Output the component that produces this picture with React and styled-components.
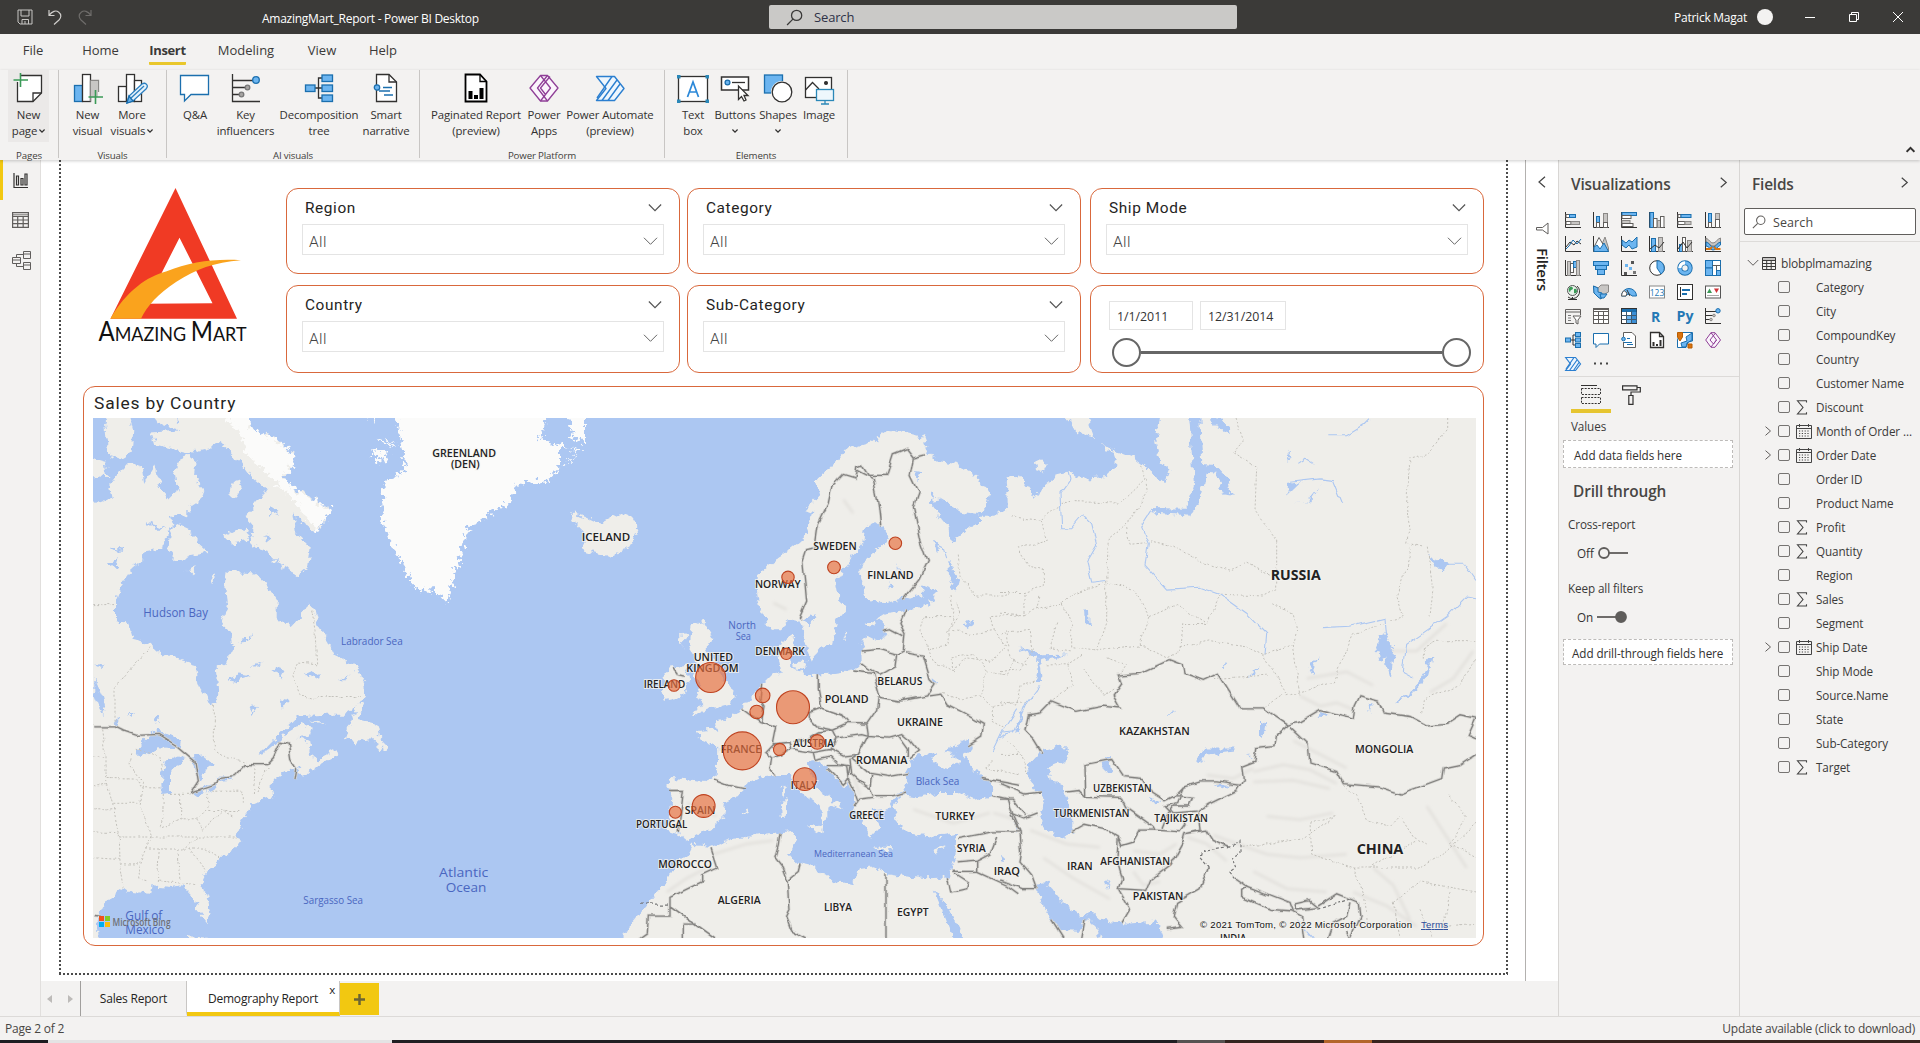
import React from "react";
import styled, { createGlobalStyle } from "styled-components";

const Global = createGlobalStyle`
  * { box-sizing: border-box; }
  html, body { margin: 0; padding: 0; }
  body {
    width: 1920px; height: 1043px; overflow: hidden; background: #f3f2f1;
    font-family: "Open Sans", "Noto Sans", sans-serif; font-size: 11.5px; color: #323130;
  }
  svg { display: block; flex: none; }
`;

const INK = "#323130";
const BLUE = "#1b6fae";
const SKY = "#6cb5f0";
const GREY = "#a6a4a2";
const YELLOW = "#f2c811";

/* ---------- shell ---------- */
const Shell = styled.div`
  width: 1920px; height: 1043px; display: flex; flex-direction: column; overflow: hidden;
`;
const TitleBar = styled.header`
  height: 34px; flex: none; background: #3b3a38; color: #fff; display: flex; align-items: center;
`;
const QuickAccess = styled.div`
  width: 262px; padding-left: 17px; display: flex; align-items: center; gap: 14px;
`;
const DocTitle = styled.div`
  width: 507px; padding-top: 3px; font-size: 12px; letter-spacing: -0.27px; white-space: nowrap;
`;
const TitleSearch = styled.div`
  width: 468px; height: 24px; border-radius: 2px; background: #cac9c7; color: #2f3247;
  display: flex; align-items: center; gap: 11px; padding-left: 17px; font-size: 13px; letter-spacing: -0.15px;
`;
const UserArea = styled.div`
  flex: 1; display: flex; align-items: center; justify-content: flex-end; padding-right: 16px;
`;
const UserName = styled.span`font-size: 12px; letter-spacing: -0.25px; padding-top: 1px;`;
const Avatar = styled.span`
  width: 16px; height: 16px; border-radius: 50%; background: #f3f2f1; margin: 0 31px 0 10px;
`;
const WindowButtons = styled.div`display: flex; align-items: center; gap: 32px;`;

const RibbonTabs = styled.nav`
  height: 36px; flex: none; display: flex; background: #f3f2f1; padding-left: 13px;
`;
const RibbonTab = styled.div`
  width: ${(p) => p.$w}px; display: flex; justify-content: center; align-items: flex-start; padding-top: 7px;
  font-size: 13px; letter-spacing: ${(p) => (p.$active ? "-0.35px" : "0")}; line-height: 18px; color: #3b3a39;
  font-weight: ${(p) => (p.$active ? 700 : 400)};
  & > span { display: block; padding-bottom: 3px; border-bottom: 3px solid ${(p) => (p.$active ? "#e9c72b" : "transparent")}; border-radius: 1px; }
`;
const Ribbon = styled.div`
  height: 90px; flex: none; display: flex; background: #f3f2f1; padding-bottom: 2px;
  box-shadow: 0 1px 3px rgba(0, 0, 0, 0.2); z-index: 2;
`;
const Group = styled.section`
  width: ${(p) => p.$w}px; border-right: 1px solid #c8c6c4; display: flex; flex-direction: column;
`;
const GroupItems = styled.div`
  display: flex; height: 72px; padding-left: ${(p) => p.$pad}px;
`;
const GroupLabel = styled.div`
  text-align: center; font-size: 9.7px; line-height: 14px; margin-top: 4px; padding-top: 3px; height: 17px; flex: none;
  letter-spacing: -0.15px; color: #3f3e3c; margin-bottom: -5px;
`;
const Command = styled.div`
  width: ${(p) => p.$w}px; display: flex; flex-direction: column; align-items: center; padding-top: 3px;
  background: ${(p) => (p.$hot ? "#ebe9e8" : "transparent")};
  font-size: 11.4px; line-height: 16px; letter-spacing: -0.12px; white-space: nowrap;
`;
const CommandIcon = styled.div`height: 34px;`;
const CommandLine = styled.div`display: flex; align-items: center; gap: 2px; height: 16px; justify-content: center;`;
const RibbonEnd = styled.div`
  flex: 1; display: flex; justify-content: flex-end; align-items: flex-end; padding: 0 5px 4px 0;
`;

const Workspace = styled.div`height: 856px; flex: none; display: flex;`;
const Rail = styled.aside`
  width: 41px; border-right: 1px solid #e1dfdd; display: flex; flex-direction: column;
`;
const RailItem = styled.div`
  height: 40px; display: flex; align-items: center; padding-left: 9px;
  border-left: 3px solid ${(p) => (p.$active ? YELLOW : "transparent")};
`;
const Center = styled.div`width: 1518px; display: flex; flex-direction: column; border-right: 1px solid #d8d6d4;`;
const CanvasRow = styled.div`height: 821px; display: flex; background: #fff;`;
const Canvas = styled.main`width: 1485px; border-right: 1px solid #b3b1af; padding-left: 18px;`;
const Page = styled.div`
  width: 1449px; height: 815px; padding: 28px 0 0 24px;
  background:
    repeating-linear-gradient(to bottom, #4b4b4b 0 2px, transparent 2px 4px) left top / 2px 100% no-repeat,
    repeating-linear-gradient(to bottom, #4b4b4b 0 2px, transparent 2px 4px) right top / 2px 100% no-repeat,
    repeating-linear-gradient(to right, #4b4b4b 0 2px, transparent 2px 4px) left bottom / 100% 2px no-repeat;
`;
const Top = styled.div`display: flex; height: 185px;`;
const LogoBox = styled.div`width: 203px; padding-left: 12px;`;
const Slicers = styled.div`
  display: grid; grid-template-columns: 401px 403px 394px; grid-template-rows: 97px 88px;
`;
const Card = styled.div`
  width: 394px; height: ${(p) => p.$h}px; border: 1px solid #d9683c; border-radius: 12px;
  padding: ${(p) => p.$pad || "7px 15px 0"}; font-family: Roboto, sans-serif;
`;
const SlicerHead = styled.div`
  display: flex; justify-content: space-between; align-items: center; height: 23px; padding: 0 2px 0 3px;
  font-size: 15.4px; letter-spacing: 0.6px; color: #252423;
`;
const SlicerBox = styled.div`
  margin-top: 5px; height: 31px; border: 1px solid #e4e4e4; display: flex; justify-content: space-between;
  align-items: center; padding: 3px 5px 0 6px; font-size: 15.5px; font-weight: 300; letter-spacing: 0.4px; color: #444;
`;
const SlicerValue = styled.span`padding-top: 1px;`;
const DateRow = styled.div`display: flex; gap: 7px;`;
const DateInput = styled.div`
  width: ${(p) => p.$w}px; height: 29px; border: 1px solid #e4e4e4; padding: 2px 0 0 7px; line-height: 26px;
  font-family: "Open Sans", sans-serif; font-size: 12.4px; color: #333; letter-spacing: -0.05px;
`;
const Slider = styled.div`display: flex; align-items: center; margin: 8px 0 0 3px;`;
const Thumb = styled.span`width: 29px; height: 29px; flex: none; border: 2.5px solid #666; border-radius: 50%;`;
const Track = styled.span`width: 301px; height: 3px; flex: none; background: #666;`;
const MapCard = styled.div`
  margin-top: 13px; width: 1401px; height: 560px; border: 1px solid #d9683c; border-radius: 12px; padding: 5px 0 0 9px;
`;
const MapTitle = styled.div`
  height: 26px; line-height: 22px; padding-left: 1px; font-family: Roboto, sans-serif; font-size: 17.4px; letter-spacing: 0.82px; color: #252423;
`;

const FiltersPane = styled.div`
  width: 32px; display: flex; flex-direction: column; align-items: center; padding-top: 16px; background: #fff;
`;
const FiltersLabel = styled.div`
  writing-mode: vertical-rl; font-size: 15px; font-weight: 600; letter-spacing: -0.25px; line-height: 20px; margin: 13px 0 0 2px; color: #252423;
`;
const FunnelSlot = styled.div`margin-top: 34px;`;

const SheetBar = styled.div`height: 35px; display: flex; background: #f3f2f1;`;
const SheetNav = styled.div`
  width: 40px; border-right: 1px solid #a19f9d; display: flex; align-items: center; justify-content: space-between; padding: 0 7px 0 6px;
`;
const SheetTab = styled.div`
  width: ${(p) => p.$w}px; display: flex; align-items: center; justify-content: center; position: relative;
  font-size: 12px; letter-spacing: -0.2px; color: #252423;
  background: ${(p) => (p.$active ? "#fff" : "transparent")};
  border-bottom: 4px solid ${(p) => (p.$active ? YELLOW : "transparent")};
  border-right: 1px solid #c8c6c4; padding-top: 3px; white-space: nowrap;
`;
const CloseTab = styled.span`position: absolute; right: 4px; top: 0; font-size: 11.5px; line-height: 18px;`;
const AddSheet = styled.div`
  width: 39px; height: 32px; margin-top: 2px; background: ${YELLOW}; display: grid; place-items: center;
`;

/* ---------- panes ---------- */
const VizPane = styled.aside`width: 181px; border-right: 1px solid #d8d6d4;`;
const PaneHead = styled.div`
  height: 48px; display: flex; align-items: center; justify-content: space-between; padding: 0 10px 0 12px;
  font-size: 15.4px; font-weight: 600; letter-spacing: -0.18px; color: #484644;
  & > svg { margin-bottom: 3px; }
`;
const VizGrid = styled.div`
  display: grid; grid-template-columns: repeat(6, 28px); grid-auto-rows: 24px; padding: 4px 0 0 6px; height: 169px;
  border-bottom: 1px solid #dcdad8;
`;
const VizTabs = styled.div`display: flex; padding: 8px 0 0 12px;`;
const VizTab = styled.div`
  width: 40px; height: 28px; display: flex; justify-content: center;
  border-bottom: 4px solid ${(p) => (p.$active ? "#e6c530" : "transparent")};
`;
const FieldLabel = styled.div`margin: ${(p) => p.$m}; line-height: 16px; font-size: 11.7px; letter-spacing: -0.1px; color: #3b3a39;`;
const DropBox = styled.div`
  width: 170px; height: ${(p) => p.$h}px; margin-left: 4px; padding: ${(p) => p.$pad}; background: #fff; border: 1px dashed #bdbbb9;
  display: flex; align-items: center; font-size: 11.7px; letter-spacing: -0.07px; white-space: nowrap;
`;
const DrillTitle = styled.div`
  margin: 13px 0 0 14px; font-size: 15.4px; line-height: 22px; font-weight: 600; letter-spacing: -0.12px; color: #484644;
`;
const ToggleRow = styled.div`display: flex; align-items: center; margin: ${(p) => p.$m}; height: 16px; font-size: 11.7px; gap: ${(p) => p.$gap || 4}px;`;

const FieldsPane = styled.aside`width: 180px;`;
const SearchBox = styled.div`
  width: 172px; height: 27px; margin-left: 4px; border: 1px solid #605e5c; border-radius: 2px; background: #fff;
  display: flex; align-items: center; gap: 7px; padding: 1px 0 0 7px; font-size: 12.5px; letter-spacing: 0.1px; color: #484644;
`;
const FieldsList = styled.div`margin-top: 6px; border-top: 1px solid #dddbd9; padding-top: 9px; color: #3b3a39;`;
const TableRow = styled.div`display: flex; align-items: center; height: 24px; padding-left: 7px; gap: 3px; font-size: 12px; letter-spacing: -0.2px;`;
const TableName = styled.span`padding-left: 2px;`;
const FieldRow = styled.div`
  display: grid; grid-template-columns: 15px 18px 20px 1fr; align-items: center; height: 24px; padding-left: 23px;
  font-size: 11.7px; letter-spacing: -0.1px; white-space: nowrap;
`;
const Check = styled.span`width: 12px; height: 12px; border: 1px solid #767472; border-radius: 2px;`;

const StatusBar = styled.footer`
  height: 24px; flex: none; border-top: 1px solid #dcdad8; display: flex; justify-content: space-between; align-items: center;
  padding: 0 5px 0 5px; font-size: 12px; letter-spacing: -0.22px; color: #484644;
`;
const Strip = styled.div`height: 3px; flex: none; display: flex;`;
const StripPart = styled.span`width: ${(p) => p.$w}px; background: ${(p) => p.$c};`;

/* ---------- small icons ---------- */
const Chevron = ({ dir = "down", w = 14, c = "#444", s = 1.2 }) => {
  const d = { down: "M1 4 L8 11 L15 4", up: "M1 12 L8 5 L15 12", left: "M12 1 L4 8 L12 15", right: "M4 1 L12 8 L4 15" }[dir];
  return (
    <svg width={w} height={w} viewBox="0 0 16 16" fill="none" stroke={c} strokeWidth={(s * 16) / w}>
      <path d={d} />
    </svg>
  );
};
const Magnifier = ({ w = 16, c = INK }) => (
  <svg width={w} height={w} viewBox="0 0 16 16" fill="none" stroke={c} strokeWidth="1.2">
    <circle cx="10" cy="6" r="4.8" />
    <path d="M6.5 9.5 L1 15" />
  </svg>
);

const Svg32 = ({ children }) => (
  <svg width="32" height="32" viewBox="0 0 32 32" fill="none" strokeWidth="1.3" stroke={INK}>
    {children}
  </svg>
);
const RibbonIcons = {
  page: (
    <Svg32>
      <path d="M8 2.5 H28.5 V20 L20 28.5 H4.5 V9" fill="#fff" />
      <path d="M28.5 20 H20 V28.5" />
      <path d="M7.5 0 V14 M0.5 7 H15" stroke="#3b9a57" strokeWidth="1.6" />
    </Svg32>
  ),
  visual: (
    <Svg32>
      <rect x="2.5" y="12.5" width="8" height="16" fill={SKY} stroke={BLUE} />
      <rect x="10.5" y="1.5" width="8" height="27" fill="#fff" />
      <path d="M18.5 7.5 H26.5 V19 M18.5 28.5 V7.5" fill="#c8c6c4" stroke="#8a8886" />
      <rect x="19" y="8" width="7" height="16" fill="#c8c6c4" stroke="none" />
      <path d="M23.5 17 V31 M16.5 24 H31" stroke="#3b9a57" strokeWidth="1.6" />
    </Svg32>
  ),
  more: (
    <Svg32>
      <rect x="2.5" y="13.5" width="8" height="15" fill="#fff" />
      <rect x="10.5" y="1.5" width="8" height="27" fill="#fff" />
      <rect x="18.5" y="7.5" width="7" height="21" fill="#fff" />
      <path d="M11 30 L13 23 L26 11 Q29 9 31 12 Q32 14 30 16 L17 28 Z" fill="#e5f2fb" stroke="#2b7fc0" />
      <path d="M11 30 L13 23 L17 28 Z" fill={SKY} stroke={BLUE} />
      <path d="M15 25 L28 13" stroke="#2b7fc0" />
    </Svg32>
  ),
  qa: (
    <Svg32>
      <path d="M1.5 2.5 H29.5 V21.5 H12 L5.5 28 V21.5 H1.5 Z" fill="#fff" stroke={BLUE} />
    </Svg32>
  ),
  key: (
    <Svg32>
      <path d="M2.5 1 V28.5 H30 M2.5 7.5 H23 M2.5 14.5 H15 M2.5 21.5 H9" />
      <circle cx="26" cy="7" r="3.3" fill={SKY} stroke={BLUE} />
      <circle cx="17.5" cy="14.5" r="2.3" fill={GREY} stroke="#777" />
      <circle cx="11.5" cy="21.5" r="2.3" fill={GREY} stroke="#777" />
    </Svg32>
  ),
  tree: (
    <Svg32>
      <path d="M12 15 H20 M15.5 15 V5 H20 M15.5 15 V25 H20" />
      <g fill={SKY} stroke={BLUE}>
        <rect x="2.5" y="12" width="9.5" height="6.5" />
        <rect x="19" y="2" width="10.5" height="6.5" />
        <rect x="19" y="12" width="10.5" height="6.5" />
        <rect x="19" y="22" width="10.5" height="6.5" />
      </g>
    </Svg32>
  ),
  smart: (
    <Svg32>
      <path d="M6.5 12 V1.5 H19 L26.5 9 V28.5 H6.5 V17" fill="#fff" />
      <path d="M19 1.5 V9 H26.5" />
      <path d="M13 14.5 H22 M9 18 H20 M14 22 H23" stroke={BLUE} />
      <circle cx="7" cy="14.5" r="2.7" fill={SKY} stroke={BLUE} />
    </Svg32>
  ),
  paginated: (
    <Svg32>
      <path d="M5.5 1.5 H20 L26.5 8.5 V28.5 H5.5 Z" fill="#fff" stroke="#000" strokeWidth="1.8" />
      <path d="M20 1.5 V8.5 H26.5" stroke="#000" />
      <path d="M10.5 18 V26 M16 22 V26 M21.5 15 V26" stroke="#000" strokeWidth="4" />
    </Svg32>
  ),
  apps: (
    <Svg32>
      <g stroke="#8f3f97" strokeWidth="1.3" strokeLinejoin="round" fill="#fbf5fc">
        <path d="M12.5 2.5 H19.5 L30 15 L19.500 28 H12.500 L2 15 Z" />
        <path d="M12.500 2.500 L22.500 15 L17.500 21.500 L12.500 15 L22 3.500 M12.500 28 L22.500 15 M19.500 28 L9.500 15 L19.500 2.500" fill="none" />
      </g>
    </Svg32>
  ),
  automate: (
    <Svg32>
      <g stroke="#2b7fd0" strokeWidth="1.4" strokeLinejoin="round" fill="#eef6fd">
        <path d="M2.5 3.5 H20.5 L30 15.5 L20.5 27.5 H2.5 L12 15.5 Z" />
        <path d="M18 3.5 L3 25 M23 7 L8 27.5 M26 11 L14 27.5" fill="none" />
      </g>
    </Svg32>
  ),
  text: (
    <Svg32>
      <rect x="1.5" y="3.5" width="29" height="25" fill="#fff" />
      <path d="M10.5 24 L16 9 L21.5 24 M12.5 19 H19.5" stroke="#2b88d8" strokeWidth="1.7" />
      <g fill="#2b88b8" stroke="none">
        <rect x="0" y="2" width="3.5" height="3.5" /><rect x="28.5" y="2" width="3.5" height="3.5" />
        <rect x="0" y="26.5" width="3.5" height="3.5" /><rect x="28.5" y="26.5" width="3.5" height="3.5" />
      </g>
    </Svg32>
  ),
  button: (
    <Svg32>
      <rect x="2.5" y="4" width="27" height="13" fill="#fff" strokeWidth="1.5" />
      <circle cx="8.5" cy="9.5" r="2.4" fill={SKY} stroke={BLUE} />
      <path d="M13 9.5 H26" />
      <path d="M19.5 13 V26.5 L22.5 23.5 L25 28 L27 27 L25 22.5 H29 Z" fill="#fff" />
    </Svg32>
  ),
  shapes: (
    <Svg32>
      <rect x="2.5" y="2" width="18" height="18" fill={SKY} stroke={BLUE} />
      <circle cx="20" cy="19" r="11" fill="#f3f2f1" stroke="none" />
      <circle cx="20" cy="19" r="9.8" fill="#fff" />
    </Svg32>
  ),
  image: (
    <Svg32>
      <rect x="2.5" y="4.5" width="26" height="20" fill="#fff" />
      <path d="M2.5 17 L9.5 9.5 L16 16" />
      <circle cx="23" cy="10" r="1.4" fill={INK} />
      <rect x="13.5" y="16.5" width="17" height="11" fill="#eef7fc" stroke="#2b88b8" />
      <path d="M22 27.5 V31 M18 31 H26" stroke="#2b88b8" />
    </Svg32>
  ),
};

const groups = [
  { label: "Pages", w: 59, pad: 8, items: [["page", 41, "New", "page", 1]] },
  { label: "Visuals", w: 108, pad: 5, items: [["visual", 47, "New", "visual"], ["more", 42, "More", "visuals", 1]] },
  { label: "AI visuals", w: 253, pad: 4, items: [["qa", 48, "Q&A"], ["key", 53, "Key", "influencers"], ["tree", 94, "Decomposition", "tree"], ["smart", 40, "Smart", "narrative"]] },
  { label: "Power Platform", w: 245, pad: 7, items: [["paginated", 98, "Paginated Report", "(preview)"], ["apps", 38, "Power", "Apps"], ["automate", 94, "Power Automate", "(preview)"]] },
  { label: "Elements", w: 183, pad: 9, items: [["text", 38, "Text", "box"], ["button", 46, "Buttons", "", 1], ["shapes", 40, "Shapes", "", 1], ["image", 42, "Image"]] },
];

/* ---------- visualization gallery ---------- */
const axes = <path d="M.5 0 V15.5 H16" stroke={INK} fill="none" />;
const bl = { fill: SKY, stroke: BLUE };
const gr = { fill: "#c8c6c4", stroke: "#8a8886" };
const wh = { fill: "#fff", stroke: "#605e5c" };
const R = ({ b, k }) => <rect x={b[0]} y={b[1]} width={b[2]} height={b[3]} {...k} />;
const letters = { fontFamily: "Open Sans, sans-serif", fontWeight: 700, fill: "#2478b5" };
const gallery = [
  <>{axes}<R b={[1, 2.5, 4, 3]} k={wh} /><R b={[4.5, 2.5, 6, 3]} k={bl} /><R b={[1, 9.5, 5, 3]} k={wh} /><R b={[6, 9.5, 8.5, 3]} k={gr} /></>,
  <>{axes}<R b={[3.5, 4.5, 3, 6]} k={bl} /><R b={[3.5, 10.5, 3, 5]} k={wh} /><R b={[10.5, 1.5, 4, 9]} k={gr} /><R b={[10.5, 10.5, 4, 5]} k={wh} /></>,
  <>{axes}<R b={[1, .5, 14.5, 3]} k={bl} /><R b={[1, 3.5, 9, 3]} k={wh} /><R b={[1, 8.5, 8, 3]} k={gr} /><R b={[1, 11.5, 11, 3]} k={wh} /></>,
  <>{axes}<R b={[1, .5, 3.5, 15]} k={bl} /><R b={[4.5, 6.5, 3.5, 9]} k={wh} /><R b={[8.5, 8.5, 3, 7]} k={gr} /><R b={[11.5, 4.5, 3.5, 11]} k={wh} /></>,
  <>{axes}<R b={[1, 2.5, 3, 3]} k={wh} /><R b={[4, 2.5, 10, 3]} k={bl} /><R b={[1, 9.5, 7, 3]} k={wh} /><R b={[8, 9.5, 6, 3]} k={gr} /></>,
  <>{axes}<R b={[3.5, 1.5, 3, 9]} k={bl} /><R b={[3.5, 10.5, 3, 5]} k={wh} /><R b={[10.5, 1.5, 4, 6]} k={gr} /><R b={[10.5, 7.5, 4, 8]} k={wh} /></>,
  <>{axes}<path d="M1 11 L5 6 L9 9 L12 5 L16 8" stroke={INK} fill="none" /><path d="M1 13 L4 10 L8 4 L12 8 L16 3" stroke={BLUE} fill="none" /></>,
  <>{axes}<path d="M9 8 L12 1 L15.5 12 V15.5 H9Z" {...gr} /><path d="M1 11 L6 1.5 L11 10 L8 15 H1Z" {...wh} /><path d="M1 11 L4 9 L7 13 L11 7 L15.5 15.5 H1Z" {...bl} /></>,
  <>{axes}<path d="M1 4 L5 7 L8 4 L11 6 L16 1 V11 L11 13 L8 9 L5 12 L1 9Z" {...bl} /></>,
  <>{axes}<R b={[2.5, 2.5, 4, 13]} k={bl} /><R b={[9.5, 1.5, 4, 14]} k={gr} /><path d="M1 13 L6 9 L10 12 L15 6" stroke={INK} fill="none" /></>,
  <>{axes}<R b={[2.5, 8.5, 3, 7]} k={bl} /><R b={[5.5, 1.5, 3, 14]} k={wh} /><R b={[10.5, 4.5, 4, 11]} k={gr} /><path d="M1 13 L6 6 L10 12 L15 6" stroke={INK} fill="none" /></>,
  <>{axes}<path d="M1 2 C5 4 5 7 8 7 C11 7 12 3 15.5 2 V6 C12 7 11 10 8 10 C5 10 4 6 1 6Z" {...gr} /><path d="M1 6 C5 7 5 11 8 11 C11 11 12 7 15.5 6 V9 C12 11 11 14 8 14 C5 14 4 10 1 10Z" {...bl} /><path d="M1 13 H5 L7 11 M15.5 13 H11 L9 11" stroke="#d9730f" fill="none" strokeWidth="2" /></>,
  <>{axes}<R b={[2.5, 1.5, 3, 14]} k={gr} /><R b={[5.5, 3.5, 3, 9]} k={wh} /><R b={[8.5, 1.5, 3, 6]} k={bl} /><R b={[11.5, .5, 3, 15]} k={gr} /></>,
  <><R b={[.5, 1.5, 15, 4]} k={bl} /><R b={[2.5, 5.5, 11, 4]} k={bl} /><R b={[4.5, 9.5, 7, 5]} k={bl} /></>,
  <>{axes}<g fill="#555"><rect x="10" y="1" width="3" height="3" /><rect x="3" y="12" width="3" height="3" /><rect x="12" y="11" width="3" height="3" fill="#777" /></g><g fill={SKY}><rect x="4" y="4" width="3" height="3" /><rect x="8" y="7" width="3" height="3" /></g></>,
  <><circle cx="8" cy="8" r="7.3" fill="#fff" stroke={INK} /><path d="M8 .7 A7.3 7.3 0 0 1 12 14 L8 8Z" {...bl} /></>,
  <><circle cx="8" cy="8" r="5.2" fill="none" stroke={BLUE} strokeWidth="5" /><circle cx="8" cy="8" r="5.2" fill="none" stroke={SKY} strokeWidth="3.2" /><path d="M8 2.8 A5.2 5.2 0 0 0 2.8 8" fill="none" stroke="#fff" strokeWidth="3.2" /></>,
  <><R b={[.5, .5, 15, 15]} k={{ ...wh, stroke: BLUE }} /><R b={[.5, .5, 7, 7.5]} k={bl} /><R b={[.5, 8, 7, 7.5]} k={bl} /><path d="M7.5 5.5 H15.5 M11.5 5.5 V15.5" stroke="#605e5c" /><R b={[11.5, 10.5, 4, 5]} k={bl} /></>,
  <><circle cx="7.5" cy="6.5" r="5" fill="#e8f3ea" stroke="#555" /><path d="M5 3 Q8 2 8 5 Q5 6 5 8 Q3 7 4 4Z M9 5 Q12 4 12 8 Q10 10 9 9Z" fill="#3b9a57" /><path d="M12 2 A7 7 0 0 1 3 13 M7.5 13 V15.5 M3 15.5 H12" stroke={INK} fill="none" /></>,
  <><path d="M.5 2 L5 4 L8 1 L15.5 1 V8 L12 10 L8 15 L5 13 L1 9Z" {...gr} /><path d="M.5 2 L5 4 L5 8 L9 9 L8 15 L5 13 L1 9Z" {...bl} /><path d="M7 10 H14 L11 14 H8Z" {...bl} /></>,
  <><path d="M.5 12 A7.5 7.5 0 0 1 15.5 12 H11 A3.4 3.4 0 0 0 5 12Z" {...bl} /><path d="M.5 12 A7.5 7.5 0 0 1 3 6.5 L6 9 L5 12Z" {...wh} /><path d="M6 6 L9 12" stroke={INK} /></>,
  <><R b={[.5, 2, 15, 12]} k={{ fill: "#fff", stroke: "#888" }} /><text x="8" y="11.5" fontSize="8.5" textAnchor="middle" fontFamily="Open Sans, sans-serif" fill="#2478b5">123</text></>,
  <><R b={[.5, .5, 15, 15]} k={{ fill: "#fff", stroke: INK }} /><path d="M3.5 3 V13" stroke={INK} /><path d="M5 6 H13 M5 10 H10" stroke={BLUE} strokeWidth="2" /></>,
  <><R b={[.5, 2, 15, 12]} k={{ fill: "#fff", stroke: "#555" }} /><path d="M2 9 L4.5 4.5 L7 9Z" fill="#3b9a57" /><path d="M9 4.5 H14 L11.5 9Z" fill="#d13438" /><path d="M2 11.5 H14" stroke="#aaa" /></>,
  <><path d="M.5 15.5 V1.5 H15.5 V7 M.5 4 H15.5 M.5 15.5 H9" stroke="#605e5c" fill="none" /><path d="M3 7.5 H6 M3 10 H6 M3 12.5 H6" stroke="#777" /><path d="M8 8 H16 L13 12 V16 L11 15 V12Z" {...wh} /></>,
  <><R b={[.5, .5, 15, 15]} k={{ fill: "#fff", stroke: "#605e5c" }} /><path d="M.5 3.5 H15.5 M.5 7.5 H15.5 M.5 11.5 H15.5 M5.5 3 V15.5 M10.5 3 V15.5 M.5 1.5 H15.5" stroke="#605e5c" /></>,
  <><R b={[.5, .5, 15, 15]} k={{ fill: "#fff", stroke: INK }} /><rect x="1" y="1" width="14.5" height="3" fill={BLUE} /><rect x="6" y="8" width="5" height="7" fill={SKY} /><rect x="11" y="4" width="4.5" height="11" fill="#3b8fd6" /><path d="M.5 7.5 H15.5 M.5 11.5 H15.5 M5.5 3 V15.5 M10.5 3 V15.5" stroke="#405a70" /></>,
  <text x="2" y="13.5" fontSize="14" {...letters}>R</text>,
  <text x="-.5" y="13" fontSize="13.5" textLength="17" lengthAdjust="spacingAndGlyphs" {...letters}>Py</text>,
  <>{axes}<path d="M1 3.5 H11 M1 7.5 H8 M1 11.5 H5" stroke={INK} /><circle cx="13" cy="2.8" r="2.2" {...bl} /><circle cx="9" cy="7.5" r="1.3" {...gr} /><circle cx="6" cy="11.5" r="1.3" {...gr} /></>,
  <><path d="M5 8 H10 M8 8 V3 H10 M8 8 V13 H10" stroke={INK} fill="none" /><R b={[.5, 6, 5, 4]} k={bl} /><R b={[10.5, .5, 5, 4]} k={bl} /><R b={[10.5, 6, 5, 4]} k={bl} /><R b={[10.5, 11.5, 5, 4]} k={bl} /></>,
  <path d="M.5 1.5 H15.5 V12 H6.5 L3 15.5 V12 H.5Z" fill="#fff" stroke={BLUE} />,
  <><path d="M2.5 5 V.5 H11 L14.5 4 V15.5 H2.5 V10" {...wh} /><path d="M6 6.5 H9 M3 10.5 H11 M6 12.5 H12" stroke={BLUE} /><circle cx="2.5" cy="7" r="1.8" {...bl} /></>,
  <><path d="M1.5 .5 H10.5 L14.5 4.5 V15.5 H1.5Z M10.5 .5 V4.5 H14.5" fill="#fff" stroke={INK} strokeWidth="1.3" /><path d="M4.5 10 V14 M8 12 V14 M11.5 8 V14" stroke={INK} strokeWidth="2" /></>,
  <><path d="M3 .5 H15.5 V9 L11 10 L9 15.5 H.5 V8Z" fill="#fff" stroke={BLUE} /><path d="M15 1 L9 5 L10 9 L4 11 L5 15 L9 15 L10 11 L15 8Z" fill={SKY} stroke={BLUE} /><path d="M.5 .5 H5.5 V5 L3 9 L.5 5Z M11 12 H15 V16 H11Z" fill="#d9730f" stroke="#b85c00" /></>,
  <g fill="#fbf5fc" stroke="#8f3f97"><path d="M6 .7 H10 L15.5 8 L10 15.3 H6 L.7 8Z" /><path d="M6 .7 L11.500 8 L8.500 12 L5 8 L10.500 1 M6 15 L11.500 8" fill="none" /></g>,
  <g fill="#eef6fd" stroke="#2b7fd0" strokeWidth="1.2"><path d="M.7 1.5 H10.5 L15.5 8 L10.5 14.5 H.7 L5.5 8Z" /><path d="M9 1.5 L1 13 M12 4 L4.5 14.5 M14 6.5 L8.5 14.5" fill="none" /></g>,
  <g fill="#444"><rect x="1" y="6.5" width="2" height="2" /><rect x="7" y="6.5" width="2" height="2" /><rect x="13" y="6.5" width="2" height="2" /></g>,
];

const Sigma = () => (
  <svg width="12" height="15" viewBox="0 0 12 15" fill="none" stroke="#444" strokeWidth="1.1">
    <path d="M10.5 2.5 V.8 H1.5 L7 7.5 L1.5 14 H10.5 V12.3" />
  </svg>
);
const Calendar = () => (
  <svg width="16" height="15" viewBox="0 0 16 15" fill="none" stroke="#444">
    <path d="M.5 1.5 H15.5 V14.5 H.5Z M.5 4.5 H15.5 M3.5 0 V3 M12.5 0 V3" />
    <path d="M3 7 H13.5 M3 9.5 H13.5 M3 12 H13.5" strokeDasharray="1.2 1.6" />
  </svg>
);
const TableIcon = ({ w = 14, c = "#3b3a39" }) => (
  <svg width={w} height={w - 1} viewBox="0 0 14 13" fill="none" stroke={c}>
    <path d="M.5 .5 H13.5 V12.5 H.5Z M.5 3.5 H13.5 M.5 6.5 H13.5 M.5 9.5 H13.5 M4.7 3 V12.5 M9.2 3 V12.5" />
    <path d="M.5 2 H13.5" strokeWidth=".5" />
  </svg>
);

const fields = [
  ["Category"], ["City"], ["CompoundKey"], ["Country"], ["Customer Name"], ["Discount", "sum"],
  ["Month of Order ...", "date"], ["Order Date", "date"], ["Order ID"], ["Product Name"], ["Profit", "sum"],
  ["Quantity", "sum"], ["Region"], ["Sales", "sum"], ["Segment"], ["Ship Date", "date"], ["Ship Mode"],
  ["Source.Name"], ["State"], ["Sub-Category"], ["Target", "sum"],
];

/* ---------- map ---------- */
/* Three sheets of the map share one vertical scale; each sheet has its own horizontal origin. */
const SHEET = { A: 80, B: 560, C: 1000 };
const KX = 1 / 3;
const KY = 1 / 2.904;
const toX = (s, x) => SHEET[s] + x * KX;
const toY = (y) => 410 + y * KY;
const path = (s, str, close) => {
  const n = str.trim().split(/[\s,]+/).map(Number);
  let d = "";
  for (let i = 0; i < n.length; i += 2) d += (i ? "L" : "M") + toX(s, n[i]).toFixed(1) + " " + toY(n[i + 1]).toFixed(1);
  return d + (close ? "Z" : "");
};
const Shapes = ({ data, close = true }) =>
  Object.keys(data).map((s) => <path key={s} d={data[s].map((p) => path(s, p, close)).join("")} />);

const land = {
  A: [
    "0,275 60,270 95,255 88,220 110,190 145,155 185,165 192,212 225,160 240,215 262,262 290,235 285,180 300,140 325,130 350,150 345,190 368,230 360,262 325,285 325,315 270,300 280,330 255,365 250,400 190,410 185,440 150,470 125,505 108,550 108,610 145,620 160,668 210,680 250,712 345,738 352,790 380,830 392,855 405,855 415,830 412,770 410,745 440,730 462,690 455,655 425,615 440,560 435,500 440,470 525,475 560,510 590,550 590,605 635,630 665,600 685,560 705,585 715,625 745,670 765,710 830,750 855,790 858,830 840,855 790,885 740,885 650,890 600,940 560,980 530,1000 550,1000 590,968 625,935 660,915 695,922 690,945 655,950 685,965 690,1000 710,1015 770,985 775,1000 740,1020 690,1050 670,1068 660,1045 648,1030 640,1040 600,1065 575,1080 575,1105 580,1122 535,1135 510,1145 505,1165 480,1195 485,1215 468,1225 478,1262 430,1295 380,1345 365,1375 385,1430 392,1470 380,1490 355,1455 340,1410 310,1380 270,1385 215,1380 210,1405 160,1400 130,1390 80,1425 50,1480 55,1570 0,1570",
    "280,-20 490,-20 520,60 580,80 640,130 640,160 610,190 640,230 700,260 752,290 710,352 670,335 640,300 650,360 692,400 685,455 650,485 600,450 560,410 510,395 520,350 500,305 540,260 560,230 510,190 480,150 440,110 410,90 390,110 330,125 225,100 215,65 290,60 300,40",
    "0,130 75,150 85,195 0,190", "75,40 95,-10 140,-10 160,60 155,120 120,140 85,130", "200,-10 290,-10 295,55 240,40",
    "480,205 490,225 470,255 448,245 455,210", "285,330 330,350 350,385 385,415 330,425 290,440 265,410 270,360",
    "430,365 470,345 510,350 500,380 450,388", "320,465 350,450 335,480", "390,480 405,475 400,505",
    "855,850 835,900 870,905 895,920 900,950 918,975 905,985 870,955 830,965 795,955 800,935 815,900 830,860", "685,895 742,917 715,912",
    "330,1528 390,1533 330,1545",
  ],
  B: [
    "600,575 590,520 590,480 640,440 700,395 740,360 760,300 735,290 785,240 765,205 810,170 860,115 930,95 985,60 1030,65 1090,80 1105,120 1130,150 1190,160 1250,190 1287,250 1270,305 1200,295 1140,260 1105,265 1130,300 1165,340 1170,385 1195,370 1230,340 1280,330 1320,300 1350,290 1345,250 1350,200 1380,190 1460,300 1460,1570 185,1570 190,1533 215,1490 260,1440 310,1380 340,1330 380,1290 395,1262 450,1270 520,1245 600,1235 700,1225 710,1250 690,1290 720,1320 770,1330 820,1365 880,1380 900,1330 935,1325 980,1345 1040,1355 1100,1360 1165,1358 1185,1300 1195,1230 1130,1240 1080,1235 1040,1225 1015,1200 1000,1150 1020,1115 1000,1130 985,1160 935,1165 960,1210 930,1242 905,1195 880,1150 885,1110 850,1085 800,1040 775,1015 745,1020 755,1060 775,1105 820,1130 850,1160 805,1148 805,1180 785,1205 785,1165 760,1135 725,1112 690,1060 640,1060 600,1065 560,1085 550,1105 495,1140 490,1180 450,1215 400,1240 380,1248 355,1230 320,1218 330,1175 335,1110 322,1090 330,1068 440,1078 470,1060 472,975 415,950 408,932 475,928 468,905 510,895 545,870 570,840 605,800 635,770 665,765 655,710 665,675 702,652 705,690 690,720 695,748 740,770 775,768 820,765 885,755 905,735 903,690 920,655 950,670 985,655 975,630 952,605 975,590 1040,580 1110,565 1080,530 1035,545 960,562 920,550 903,490 905,450 940,420 965,395 985,370 972,345 945,325 915,340 910,385 880,420 845,470 825,500 835,545 862,570 830,610 812,680 790,690 755,730 735,670 718,610 700,605 655,640 620,625",
    "55,340 35,300 75,310 120,330 180,300 215,315 235,350 215,390 150,428 95,415 60,405 85,370",
    "395,625 430,615 457,660 435,700 460,720 495,790 527,815 515,850 440,870 395,887 430,845 405,830 425,800 400,770 420,740 385,690",
    "340,745 375,740 387,780 370,830 315,842 305,820 320,790 310,765",
    "740,1210 790,1203 787,1232", "660,1140 682,1130 680,1182 662,1182", "665,1095 677,1088 675,1125 667,1120", "948,1268 1002,1270 1002,1276 950,1274",
    "1120,1277 1157,1263 1132,1285", "700,732 742,730 735,755 705,750", "850,665 858,642 862,645 854,668", "918,622 942,612 945,625 925,632", "545,1165 562,1160 558,1172",
    "380,660 365,690 360,650",
  ],
  C: [
    "20,195 70,200 50,240 60,280 105,265 120,230 170,190 210,180 235,200 320,195 350,160 335,115 400,140 440,170 495,212 510,175 480,150 465,90 485,-20 1480,-20 1480,1570 -60,1570 -60,310 25,310",
    "105,150 120,143 138,160 130,178 108,172", "185,-10 250,-10 282,78 230,70", "305,95 340,125 318,120",
  ],
};
const snow = {
  A: [
    "410,-10 490,-10 520,60 580,80 640,130 640,160 610,190 640,230 700,260 752,290 710,352 640,262 560,180 500,130 490,80",
    "945,-10 960,80 975,130 970,180 925,200 905,240 910,330 940,400 980,470 1010,525 1060,520 1100,562 1115,510 1140,430 1160,350 1230,300 1290,270 1310,215 1400,205 1495,120 1440,100 1380,90 1390,50 1420,-10",
    "880,110 925,130 912,155 882,140", "890,80 960,110 900,92", "1460,-10 1515,-10 1515,95 1480,80", "865,-10 900,-10 880,38", "1440,108 1507,110 1440,175",
  ],
};
const water = {
  A: [
    "165,1002 190,965 230,925 260,940 302,960 300,985 230,982 180,1008", "245,1115 243,1050 260,1015 300,1003 320,1010 290,1025 270,1060 270,1112",
    "325,1008 365,1003 398,1030 375,1045 362,1082 350,1060 340,1030", "333,1108 410,1083 412,1095 350,1120", "410,1065 460,1063 457,1077 415,1080",
    "40,775 65,830 78,882 62,875 40,820", "440,780 480,765 515,772 470,788", "675,765 700,755 720,768 690,780", "580,755 600,742 612,760 600,780", "775,785 820,765 795,785",
    "480,670 520,650 500,668", "515,745 550,730 530,745", "505,885 520,855 528,858 512,888", "600,850 620,835 625,850 608,862", "40,740 65,738 50,750", "140,880 172,880 160,888",
    "220,895 238,888 240,905 225,908", "100,905 118,900 118,925", "195,322 250,340 262,345 225,345", "85,400 135,402 130,410 100,405", "550,360 580,370 565,382", "570,280 600,300 570,310",
    "90,440 120,430 112,455 95,455", "45,228 62,225 58,240",
  ],
  B: [
    "1040,1085 1035,1055 1060,1010 1105,995 1135,1000 1118,1018 1145,1045 1205,1022 1175,1000 1212,1002 1235,1030 1270,1070 1302,1095 1295,1122 1240,1132 1190,1112 1130,1112 1070,1125 1040,1120 1015,1130 1020,1118",
    "1150,992 1232,953 1235,985 1200,1005 1175,998", "1120,1390 1165,1440 1225,1570 1195,1570 1150,1460", "1085,508 1130,525 1122,558 1092,548", "1165,440 1197,490 1187,528 1167,480",
    "735,610 765,590 770,597 745,625", "1065,180 1085,185 1075,210", "1015,450 1025,480 1018,485", "985,490 1000,520 990,525", "1120,380 1140,400 1128,412", "1210,620 1240,610 1230,630", "1118,785 1132,795 1120,800",
    "1110,240 1125,235 1118,262", "1320,1290 1332,1300 1325,1310",
  ],
  C: [
    "565,-10 600,-10 607,160 650,163 677,190 695,243 668,240 650,185 617,182 602,250 570,307 458,297 455,285 560,287 582,220 575,120", "630,-10 685,50 690,70 640,45",
    "125,990 190,973 207,990 195,1020 145,1040 152,1080 190,1090 200,1120 217,1190 217,1228 180,1242 135,1215 118,1170 130,1130 93,1080 78,1040",
    "103,1380 142,1373 190,1430 250,1470 270,1453 300,1480 380,1492 470,1485 505,1570 310,1570 290,1500 255,1480 240,1512 180,1510 130,1440",
    "590,1020 610,983 700,983 705,992 622,1000 605,1025", "1182,850 1240,812 1275,760 1285,715 1297,718 1282,775 1230,832", "300,1020 330,1008 337,1048 318,1048", "640,1095 690,1088 668,1104",
    "1128,690 1152,640 1182,700 1172,787 1155,720 1135,730", "500,885 520,873 510,885", "780,905 800,910 790,955 780,940", "955,872 980,880 960,895", "315,1370 332,1365 325,1390",
    "865,215 960,200 900,210 862,245", "880,272 935,262 965,215 925,265", "862,115 875,140 866,145", "1290,425 1345,445 1325,470 1300,440", "255,580 270,578 272,635 258,620", "55,690 130,712 205,710 120,730 130,790 108,790 115,725",
    "45,940 70,850 60,935", "925,745 960,712 940,745 942,775", "745,775 777,743 760,770", "1105,850 1118,852 1110,878", "740,990 760,1010 745,1002", "665,745 680,738 672,752", "35,1190 60,1220 50,1225", "450,1130 490,1140 465,1142",
  ],
};
const rivers = {
  C: [
    "455,295 425,340 445,385 435,450 500,520 600,515 660,535 740,590 800,650 795,710", "205,180 210,200 180,240 185,345 215,345 250,305 275,330 290,390 260,440 275,500 320,495", "1428,545 1400,540 1340,600 1220,680 1210,760 1240,775",
    "965,632 1050,628 1155,605 1160,660", "985,75 1040,75 1090,45 1110,25", "870,210 960,200 1000,205 1028,272", "892,155 915,140 940,155", "0,955 20,940 40,935 80,850 120,800", "1320,445 1390,445 1428,495", "890,1480 940,1533",
  ],
  B: ["1300,990 1330,930 1370,870", "1160,430 1150,400 1120,385", "1380,930 1330,935"],
};
const borders = {
  A: ["40,920 105,920 130,932 170,945 235,942 290,975 345,1020 355,1080 335,1110 410,1085 415,1070 460,1065 495,1030 560,1030 580,1010 600,965 625,970 632,1015 648,1040 642,1075", "40,1468 62,1470"],
  B: [
    "718,605 740,555 735,500 728,440 740,405 765,400 775,330 805,270 815,225 850,190 885,200 890,165 905,160 925,190 980,190 1000,130 1040,115 1060,140 1095,130", "890,175 940,200 955,270 962,335",
    "1060,140 1050,190 1075,240 1060,280 1080,370 1105,440 1080,490 1030,550", "1035,585 1020,620 1035,650 1030,700 1010,710 960,695 905,700", "965,640 990,635 1030,655",
    "1035,705 1090,715 1110,780 1125,795 1100,830 1020,845 960,835 950,800 940,765 880,758", "1010,710 1005,745 960,770 925,750 905,735", "775,770 775,810 785,865 845,885 865,910 920,912 950,870 955,835",
    "785,865 745,880 745,895 770,920 820,930 865,910", "820,930 830,950 905,940 925,945 920,912", "1110,830 1145,825 1165,855 1215,880 1270,910 1265,950 1225,975", "925,945 985,950 1025,940 1050,960 1075,990 1050,1010",
    "925,945 895,1000 875,1010 930,1055 990,1065 1045,1055", "1015,945 1045,985 1045,1005", "830,950 810,985 850,1005 895,1000", "700,965 740,955 775,935 820,930", "700,985 760,995 815,985 830,950",
    "760,995 765,1015 810,1005 830,1025 870,1030 865,1070 880,1100 895,1140", "800,1030 860,1030 865,1075 850,1090 800,1040", "870,1010 875,1060 905,1085 930,1100 935,1060", "930,1100 940,1120 1000,1120 1035,1110", "885,1150 900,1130 940,1125",
    "545,865 580,890 600,905 650,920 640,970 615,995 635,1010 630,1045 645,1060", "605,795 600,840 612,860 605,905", "640,970 690,965 695,985 665,1000 640,1010", "465,1075 505,1090 555,1100", "330,1108 370,1108 365,1150 355,1225", "340,745 355,765 375,770",
    "450,1270 470,1330 425,1350 425,1370 330,1415 330,1470 265,1470 262,1525 240,1540", "330,1440 465,1533", "370,1533 370,1490 410,1490", "660,1230 655,1265 645,1300 670,1330 685,1370 690,1450 680,1470 695,1510 740,1533", "720,1320 715,1340 685,1365", "978,1345 978,1540",
    "1195,1245 1300,1225 1380,1225", "1290,1290 1310,1240", "1190,1315 1250,1310 1290,1290", "1180,1340 1250,1340 1250,1312", "1250,1340 1340,1380 1375,1405", "1165,1360 1175,1400 1220,1390 1225,1370 1185,1345", "1265,1070 1380,1090", "1300,1120 1345,1130 1360,1180 1380,1225",
  ],
  C: [
    "125,995 100,955 75,930 85,885 120,880 155,845 230,875 310,860 360,865 340,830 365,795 355,770 420,765 510,725 550,740 555,765 610,785 655,765 720,865 790,865 865,915 830,945 825,975 770,980 765,1020 725,1035 730,1070 720,1090 650,1080 600,1080 550,1095 525,1120 495,1135 455,1110 430,1070 370,1065 335,1015 255,1030 257,1120",
    "865,915 900,905 960,870 1060,895 1065,860 1080,830 1135,845 1150,880 1230,890 1280,915 1340,910 1380,885 1428,895 1405,945 1428,955", "1428,1000 1380,1030 1330,1040 1325,1070 1200,1115 1140,1095 1030,1085 1010,1050 930,1025 925,970 870,920",
    "200,1110 240,1105 257,1122 365,1125 380,1155 460,1210 465,1220", "215,1225 255,1203 310,1215 355,1240 365,1265 400,1255 420,1220 465,1220 540,1225 555,1205 550,1185", "720,1090 710,1105 625,1145 595,1165 600,1220 555,1230",
    "525,1120 580,1125 570,1150 520,1150 500,1180 485,1215", "550,1095 530,1140 500,1150 520,1170 590,1165", "355,1240 350,1310 365,1360 355,1390 440,1395 455,1360 510,1320 550,1250 555,1230 620,1220 640,1250 685,1270", "355,1390 390,1450 365,1490",
    "625,1330 600,1390 530,1430 520,1470 545,1500 500,1505", "705,1360 735,1380 870,1430 880,1455 810,1450 725,1415 725,1395 745,1380", "885,1435 930,1425 955,1445 890,1452 885,1435", "955,1440 1010,1405 1050,1420 1075,1430 1080,1470 1050,1533 1040,1510", "875,1455 905,1470 915,1540", "985,1533 1000,1490 1040,1470 1050,1430",
    "30,1175 60,1225 65,1280 60,1310 95,1350 110,1390 70,1390 0,1365", "30,1170 70,1185 110,1170", "0,1130 40,1130 65,1160 80,1175", "0,1085 75,1115 120,1110", "155,1480 190,1533", "255,1480 245,1533",
  ],
};
const dashes = {
  A: [
    "40,565 105,565", "210,690 135,770 105,810 105,910", "403,855 403,985 440,1010 500,1020", "695,580 705,640 710,740 655,735 635,770 660,830 700,840 710,832 845,832", "65,925 75,1005 75,1060 100,1150 115,1230 117,1310 130,1390", "40,1007 72,1007",
    "80,1070 170,1072 190,1100 180,1150 205,1200 215,1240 190,1290 175,1330 180,1365 205,1370", "155,1000 150,1030 190,1080 190,1097 240,1097", "40,1088 80,1088", "100,1142 175,1142", "40,1158 105,1158", "40,1228 115,1230", "115,1240 210,1240", "40,1300 115,1305",
    "120,1318 180,1318", "215,1240 470,1240", "195,1275 370,1275 420,1300", "238,1275 232,1375", "290,1275 300,1365", "235,1368 350,1378", "250,1115 248,1190 240,1215", "302,1115 302,1190 240,1215", "270,1113 335,1113", "302,1190 350,1190 380,1160 385,1110",
    "400,1107 490,1107 490,1140", "385,1163 480,1163", "350,1190 370,1220 430,1165 460,1180", "330,1275 380,1345", "525,1040 520,1120", "565,1040 540,1080 530,1110", "170,985 240,1005 245,1050", "310,1275 360,1240",
  ],
  B: [
    "1195,420 1200,480 1250,540 1330,540 1380,525", "1170,540 1180,600 1090,600 1080,640 1105,690 1160,680 1180,600", "1180,640 1240,650 1300,640 1290,600 1380,595", "1105,690 1120,730 1180,760 1170,720 1240,710", "1180,760 1220,720 1290,730 1340,690 1300,640", "1150,820 1200,840 1260,830 1280,760 1240,710",
    "1280,760 1340,770 1360,720", "1260,830 1300,860 1290,900 1330,920", "1300,1020 1280,1040 1380,1060", "1340,640 1350,720 1400,740", "1190,560 1200,590 1160,650", "1300,860 1400,850",
  ],
  C: [
    "705,23 730,90 700,125 770,165 765,290 830,380 830,520 790,540 660,535", "1340,23 1340,55 1290,125 1230,140 1220,270 1230,330 1220,385 1275,400", "1235,400 1190,540 1210,600 1170,610", "1285,400 1300,510 1290,600", "450,380 520,395 600,440 690,465 740,445 810,480",
    "185,265 360,270 435,200 425,165", "440,200 445,235 380,330 325,375 320,500 320,610 290,695", "0,530 75,530 130,510 130,460 85,450 55,400 145,380 120,320 185,275", "30,310 120,320", "380,340 390,390 440,385", "320,500 400,520 450,600 420,680 500,720 540,700 545,620 620,620 660,540",
    "450,600 530,565 620,620", "540,690 630,670 740,685 790,710 880,685 890,640 880,590 820,560", "880,685 900,830", "790,710 860,820 800,860", "640,780 800,770", "860,830 1000,790 1060,650 1150,620", "725,1270 910,1245 1010,1180 930,1200 935,1290 1060,1330 1110,1330 1250,1250",
    "1030,1090 1070,1120 1100,1190 1170,1210 1200,1180 1240,1240 1280,1260", "1110,1330 1250,1330 1330,1290 1428,1200", "1060,1330 1090,1400 1100,1500", "1180,1430 1260,1370 1428,1400", "1350,1120 1400,1180 1350,1260 1428,1300", "1180,1430 1200,1533", "1260,1450 1300,1533", "1350,1400 1330,1500 1428,1490",
    "0,590 75,595 75,530", "75,595 110,580 120,540", "110,580 190,560 220,530 320,500", "190,560 215,630 215,690 290,700 420,685", "0,650 90,640 100,700", "170,620 150,690 215,700", "0,760 60,750 100,700", "0,850 50,860 60,800 110,790", "140,740 200,740 250,710", "200,740 220,800 160,840", "250,750 310,830 340,810", "320,720 380,740 360,770",
    "1270,690 1320,670 1428,670", "1270,690 1270,720", "1265,880 1270,840 1380,800 1428,720", "20,960 60,1000 80,1060", "0,1000 60,1000",
  ],
};
const disputed = {
  B: ["240,1435 330,1435"],
  C: ["625,1330 600,1300 605,1282 680,1272 720,1250 720,1285 695,1300 708,1330 690,1342 705,1360", "955,1450 1050,1420"],
};
const ridges = {
  C: [
    "760,1050 850,1030 930,1045 1010,1085", "760,1080 880,1075 990,1100", "880,960 960,1000 1040,1040", "640,1235 800,1290 900,1300 1040,1290", "560,1240 620,1260 680,1310", "760,1340 860,1390 980,1400", "90,1220 200,1260 300,1270", "130,1300 220,1360 330,1420",
    "400,1280 480,1290 530,1260", "400,1340 430,1380 480,1370", "900,830 960,860 1010,850 1060,870", "920,780 1040,760 1120,800", "1150,700 1250,700 1340,620", "1290,820 1360,780 1420,700", "1060,1400 1160,1440 1250,1500", "800,1180 900,1190 1000,1170",
    "1280,1150 1340,1240 1400,1330", "1120,1330 1180,1380 1230,1480", "620,1060 700,1070 760,1040",
  ],
  B: ["320,1400 380,1360 440,1330", "460,1290 560,1260 640,1250", "640,560 680,580", "850,260 880,300", "1060,1160 1180,1200 1290,1170", "380,1140 470,1180", "1300,1170 1370,1190", "880,1060 900,1120"],
};

const labels = [
  ["B", "ICELAND", 65, 211, 368], ["B", "SWEDEN", 760, 890, 395], ["B", "NORWAY", 585, 722, 507], ["B", "FINLAND", 922, 1061, 480], ["B", "UNITED", 401, 519, 718], ["B", "KINGDOM", 379, 536, 751],
  ["B", "IRELAND", 251, 376, 797], ["B", "DENMARK", 586, 734, 699], ["B", "POLAND", 794, 926, 840], ["B", "BELARUS", 952, 1087, 788], ["B", "UKRAINE", 1011, 1149, 906], ["B", "FRANCE", 482, 604, 984],
  ["B", "AUSTRIA", 700, 821, 969], ["B", "ROMANIA", 888, 1042, 1017], ["B", "ITALY", 692, 771, 1089], ["B", "SPAIN", 374, 466, 1162], ["B", "PORTUGAL", 228, 382, 1204], ["B", "GREECE", 868, 972, 1178],
  ["B", "TURKEY", 1126, 1244, 1181], ["B", "SYRIA", 1190, 1277, 1273], ["B", "IRAQ", 1301, 1380, 1339], ["B", "MOROCCO", 295, 456, 1319], ["B", "ALGERIA", 473, 602, 1423], ["B", "LIBYA", 792, 876, 1444], ["B", "EGYPT", 1011, 1106, 1457],
  ["A", "GREENLAND", 1057, 1248, 125], ["A", "(DEN)", 1113, 1199, 158],
  ["C", "RUSSIA", 812, 962, 480, 14], ["C", "KAZAKHSTAN", 357, 569, 932], ["C", "MONGOLIA", 1065, 1240, 985], ["C", "UZBEKISTAN", 279, 455, 1099], ["C", "TURKMENISTAN", 161, 388, 1171], ["C", "TAJIKISTAN", 463, 624, 1185],
  ["C", "CHINA", 1070, 1210, 1273, 14.5], ["C", "IRAN", 201, 278, 1325], ["C", "AFGHANISTAN", 301, 510, 1309], ["C", "PAKISTAN", 398, 550, 1411], ["C", "INDIA", 660, 739, 1534],
];
const seas = [
  ["A", "Hudson Bay", 190, 384, 590, 12], ["A", "Labrador Sea", 783, 968, 671, 10.3], ["A", "Atlantic", 1077, 1225, 1342, 13.3], ["A", "Ocean", 1097, 1219, 1387, 13.3], ["A", "Sargasso Sea", 670, 849, 1425, 10.3],
  ["A", "Gulf of", 136, 247, 1468, 12], ["A", "Mexico", 136, 253, 1508, 12], ["B", "North", 505, 588, 624, 10.3], ["B", "Sea", 527, 573, 658, 10.3], ["B", "Black Sea", 1067, 1198, 1077, 10.3], ["B", "Mediterranean Sea", 762, 999, 1288, 8.8],
];
const bubbles = [
  [1006, 387, 6.3], [822, 457, 6.4], [684, 486, 6.2], [679, 708, 5.7], [452, 777, 15], [342, 800, 5.8], [608, 829, 7.3], [590, 877, 6.8],
  [699, 863, 16.5], [547, 990, 19], [659, 986, 6.2], [772, 964, 7.3], [734, 1072, 11.4], [431, 1150, 11.4], [346, 1168, 6],
];

const WorldMap = () => (
  <svg width="1383" height="520" viewBox="93 418 1383 520" fontFamily="Open Sans, Noto Sans, sans-serif">
    <defs>
      <filter id="coast" filterUnits="userSpaceOnUse" x="60" y="390" width="1450" height="580">
        <feTurbulence type="fractalNoise" baseFrequency="0.13" numOctaves="3" seed="7" />
        <feDisplacementMap in="SourceGraphic" scale="10" xChannelSelector="R" yChannelSelector="G" />
      </filter>
      <filter id="jagged" filterUnits="userSpaceOnUse" x="60" y="390" width="1450" height="580">
        <feTurbulence type="fractalNoise" baseFrequency="0.2" numOctaves="3" seed="3" />
        <feDisplacementMap in="SourceGraphic" scale="16" xChannelSelector="R" yChannelSelector="G" />
      </filter>
      <filter id="wobble" filterUnits="userSpaceOnUse" x="60" y="390" width="1450" height="580">
        <feTurbulence type="fractalNoise" baseFrequency="0.07" numOctaves="2" seed="11" />
        <feDisplacementMap in="SourceGraphic" scale="6" xChannelSelector="R" yChannelSelector="G" />
      </filter>
      <filter id="soft" filterUnits="userSpaceOnUse" x="60" y="390" width="1450" height="580">
        <feGaussianBlur stdDeviation="1.8" />
      </filter>
    </defs>
    <rect x="93" y="418" width="1383" height="520" fill="#acc7f2" />
    <g fill="#efeeea" filter="url(#coast)"><Shapes data={land} /></g>
    <g fill="#fbfbfa" filter="url(#jagged)"><Shapes data={snow} /></g>
    <g fill="none" stroke="#e2e0dc" strokeWidth="2.5" filter="url(#soft)"><Shapes data={ridges} close={false} /></g>
    <g fill="#acc7f2" filter="url(#coast)"><Shapes data={water} /></g>
    <g fill="none" stroke="#acc7f2" strokeWidth="1.1" filter="url(#wobble)"><Shapes data={rivers} close={false} /></g>
    <g fill="none" stroke="#c3c1bb" strokeWidth="1" strokeDasharray="2 2" filter="url(#wobble)"><Shapes data={dashes} close={false} /></g>
    <g fill="none" filter="url(#wobble)">
      <g stroke="#d5d4d0" strokeWidth="3"><Shapes data={borders} close={false} /></g>
      <g stroke="#858482" strokeWidth="1.3"><Shapes data={borders} close={false} /></g>
      <g stroke="#777" strokeWidth="1.2" strokeDasharray="3 2"><Shapes data={disputed} close={false} /></g>
    </g>
    <g fill="#4a66c0">
      {seas.map(([s, t, a, b, y, f]) => (
        <text key={t} x={toX(s, a)} y={toY(y) + f * 0.36} fontSize={f} textLength={(b - a) / 3} lengthAdjust="spacingAndGlyphs">{t}</text>
      ))}
    </g>
    <g fill="#222" fontWeight="600" stroke="#f4f3f0" strokeWidth="2" strokeOpacity=".8" paintOrder="stroke">
      {labels.map(([s, t, a, b, y, f = 10.6]) => (
        <text key={t} x={toX(s, a)} y={toY(y) + f * 0.36} fontSize={f} fontWeight={f > 12 ? 700 : 600} textLength={(b - a) / 3} lengthAdjust="spacingAndGlyphs">{t}</text>
      ))}
    </g>
    <g fill="#e8703f" fillOpacity=".68" stroke="#bf4320" strokeWidth="1.1">
      {bubbles.map(([x, y, r]) => <circle key={x} cx={toX("B", x)} cy={toY(y)} r={r} />)}
    </g>
    <rect x="99" y="916" width="5" height="5" fill="#f1511b" /><rect x="105" y="916" width="5" height="5" fill="#80cc28" />
    <rect x="99" y="922" width="5" height="5" fill="#00adef" /><rect x="105" y="922" width="5" height="5" fill="#fbbc09" />
    <text x="112.500" y="925.500" fontSize="9.8" fill="#6e7076" textLength="58" lengthAdjust="spacingAndGlyphs" fontWeight="600">Microsoft Bing</text>
    <g fontFamily="Liberation Sans, Arial, sans-serif" fontSize="9.6">
      <text x="1200" y="928" fill="#111" stroke="#f4f3f0" strokeWidth="1.5" paintOrder="stroke" textLength="212">© 2021 TomTom, © 2022 Microsoft Corporation</text>
      <text x="1421" y="928" fill="#2a4b9b" textDecoration="underline" textLength="27">Terms</text>
    </g>
  </svg>
);

const Logo = () => (
  <svg width="156" height="158" viewBox="95 188 156 158">
    <path fillRule="evenodd" fill="#f03a24" d="M175.5 188 L237 318.700 H110.500 Z M179.500 237.700 L146 303.700 L212.500 303.300 Z" />
    <path fill="#faa31d" d="M110.300 318.700 C126 291 148 276 166 271.500 C190 262 215 258.500 241 260.300 C214 262.500 196 269 176 282 C158 294 147 306 141 318.700 Z" />
    <text x="98.500" y="341" fontFamily="Lato, sans-serif" fontSize="19.500" fill="#111" textLength="148" lengthAdjust="spacingAndGlyphs">
      <tspan fontSize="26">A</tspan>MAZING <tspan fontSize="26">M</tspan>ART
    </text>
  </svg>
);

const Slicer = ({ title, h }) => (
  <Card $h={h}>
    <SlicerHead><span>{title}</span><Chevron w={14} c="#555" /></SlicerHead>
    <SlicerBox><SlicerValue>All</SlicerValue><Chevron w={15} c="#666" s={1} /></SlicerBox>
  </Card>
);

export default function App() {
  return (
    <Shell>
      <Global />
      <TitleBar>
        <QuickAccess>
          <svg width="16" height="16" viewBox="0 0 16 16" fill="none" stroke="#c8c6c4"><path d="M1 1 H15 V15 H3 L1 13Z M4 1 V7 H12 V1 M5 15 V10.500 H11.500 V15 M8 12 V15" /></svg>
          <svg width="16" height="16" viewBox="0 0 16 16" fill="none" stroke="#d0cecc" strokeWidth="1.200"><path d="M2 1 V6.500 H7.500 M2 6.500 C5 2 9 1 11.500 3 C15 5.500 14 9 12 11 L7 15.500" /></svg>
          <svg width="16" height="16" viewBox="0 0 16 16" fill="none" stroke="#6e6c6a" strokeWidth="1.200"><path d="M14 1 V6.500 H8.500 M14 6.500 C11 2 7 1 4.500 3 C1 5.500 2 9 4 11 L9 15.500" /></svg>
        </QuickAccess>
        <DocTitle>AmazingMart_Report - Power BI Desktop</DocTitle>
        <TitleSearch><Magnifier w={17} c="#3b3a39" />Search</TitleSearch>
        <UserArea>
          <UserName>Patrick Magat</UserName>
          <Avatar />
          <WindowButtons>
            <svg width="12" height="12" viewBox="0 0 12 12" stroke="#fff"><path d="M1 6.500 H11" /></svg>
            <svg width="12" height="12" viewBox="0 0 12 12" stroke="#fff" fill="none"><path d="M1.500 3.500 H8.500 V10.500 H1.500Z M3.500 3.500 V1.500 H10.500 V8.500 H8.500" /></svg>
            <svg width="12" height="12" viewBox="0 0 12 12" stroke="#fff"><path d="M1 1 L11 11 M11 1 L1 11" /></svg>
          </WindowButtons>
        </UserArea>
      </TitleBar>

      <RibbonTabs>
        {[["File", 40], ["Home", 95], ["Insert", 39], ["Modeling", 118], ["View", 34], ["Help", 88]].map(([t, w]) => (
          <RibbonTab key={t} $w={w} $active={t === "Insert"}><span>{t}</span></RibbonTab>
        ))}
      </RibbonTabs>
      <Ribbon>
        {groups.map((g) => (
          <Group key={g.label} $w={g.w}>
            <GroupItems $pad={g.pad}>
              {g.items.map(([icon, w, a, b, more]) => (
                <Command key={icon} $w={w} $hot={icon === "page"}>
                  <CommandIcon>{RibbonIcons[icon]}</CommandIcon>
                  <CommandLine>{a}</CommandLine>
                  {(b || more) && <CommandLine>{b}{more && <Chevron w={6} s={1.3} c={INK} />}</CommandLine>}
                </Command>
              ))}
            </GroupItems>
            <GroupLabel>{g.label}</GroupLabel>
          </Group>
        ))}
        <RibbonEnd><Chevron dir="up" w={9} s={2} c={INK} /></RibbonEnd>
      </Ribbon>

      <Workspace>
        <Rail>
          <RailItem $active>
            <svg width="17" height="17" viewBox="0 0 17 17" fill="none" stroke={INK} strokeWidth="1.200"><path d="M2 1 V15.500 H16 M4.500 4 H6.500 V13 H4.500Z M9 6.500 H11 V13 H9Z M13 2 H15 V13 H13Z" /></svg>
          </RailItem>
          <RailItem><TableIcon w={17} c="#605e5c" /></RailItem>
          <RailItem>
            <svg width="19" height="19" viewBox="0 0 19 19" fill="none" stroke="#605e5c"><path d="M.5 6.500 H8.500 V12.500 H.5Z M.5 9 H8.500 M11.500 .5 H18.500 V7.500 H11.500Z M11.500 3 H18.500 M11.500 11.500 H18.500 V18.500 H11.500Z M11.500 14 H18.500 M4.500 6.500 V3.500 H11.500 M4.500 12.500 V15.500 H11.500" /></svg>
          </RailItem>
        </Rail>
        <Center>
          <CanvasRow>
            <Canvas>
              <Page>
                <Top>
                  <LogoBox><Logo /></LogoBox>
                  <Slicers>
                    <Slicer title="Region" h={86} />
                    <Slicer title="Category" h={86} />
                    <Slicer title="Ship Mode" h={86} />
                    <Slicer title="Country" h={88} />
                    <Slicer title="Sub-Category" h={88} />
                    <Card $h={88} $pad="15px 14px 0 18px">
                      <DateRow><DateInput $w={84}>1/1/2011</DateInput><DateInput $w={86}>12/31/2014</DateInput></DateRow>
                      <Slider><Thumb /><Track /><Thumb /></Slider>
                    </Card>
                  </Slicers>
                </Top>
                <MapCard>
                  <MapTitle>Sales by Country</MapTitle>
                  <WorldMap />
                </MapCard>
              </Page>
            </Canvas>
            <FiltersPane>
              <Chevron dir="left" w={12} />
              <FunnelSlot>
                <svg width="13" height="13" viewBox="0 0 13 13" fill="none" stroke="#605e5c"><path d="M12 1 V12 L6.500 8 H.5 V5.500 H6.500 Z" /></svg>
              </FunnelSlot>
              <FiltersLabel>Filters</FiltersLabel>
            </FiltersPane>
          </CanvasRow>
          <SheetBar>
            <SheetNav>
              <svg width="5" height="8" viewBox="0 0 5 8" fill="#bdbbb9"><path d="M5 0 V8 L0 4Z" /></svg>
              <svg width="5" height="8" viewBox="0 0 5 8" fill="#bdbbb9"><path d="M0 0 V8 L5 4Z" /></svg>
            </SheetNav>
            <SheetTab $w={106}>Sales Report</SheetTab>
            <SheetTab $w={153} $active>Demography Report<CloseTab>x</CloseTab></SheetTab>
            <AddSheet><svg width="11" height="11" viewBox="0 0 11 11" stroke="#6b6433" strokeWidth="2.500"><path d="M5.500 0 V11 M0 5.500 H11" /></svg></AddSheet>
          </SheetBar>
        </Center>

        <VizPane>
          <PaneHead><span>Visualizations</span><Chevron dir="right" w={11} /></PaneHead>
          <VizGrid>
            {gallery.map((g, i) => <svg key={i} width="16" height="16" viewBox="0 0 16 16" overflow="visible">{g}</svg>)}
          </VizGrid>
          <VizTabs>
            <VizTab $active>
              <svg width="20" height="19" viewBox="0 0 20 19" fill="none" stroke={INK}><path d="M0 .5 H16" /><path d="M.5 3.500 H19.500 V9.500 H.5Z M.5 12.500 H19.500 V18.500 H.5Z" strokeDasharray="2 1.200" /></svg>
            </VizTab>
            <VizTab>
              <svg width="19" height="20" viewBox="0 0 19 20" fill="none" stroke={INK} strokeWidth="1.200"><path d="M.6 .8 H15 V4.800 H.6Z M15 2.500 H18.300 V7 H9 V10 M6.800 10.500 H11 V19.300 H6.800Z" /></svg>
            </VizTab>
          </VizTabs>
          <FieldLabel $m="5px 0 6px 12px">Values</FieldLabel>
          <DropBox $h={28} $pad="1px 0 0 10px">Add data fields here</DropBox>
          <DrillTitle>Drill through</DrillTitle>
          <FieldLabel $m="13px 0 0 9px">Cross-report</FieldLabel>
          <ToggleRow $m="13px 0 0 18px">
            <span>Off</span>
            <svg width="30" height="12" viewBox="0 0 30 12" fill="none" stroke="#5f5d5b" strokeWidth="1.800"><circle cx="6" cy="6" r="5" /><path d="M11 6 H30" /></svg>
          </ToggleRow>
          <FieldLabel $m="19px 0 0 9px">Keep all filters</FieldLabel>
          <ToggleRow $m="13px 0 14px 18px" $gap={3}>
            <span>On</span>
            <svg width="31" height="12" viewBox="0 0 31 12" fill="#5f5d5b" stroke="#5f5d5b" strokeWidth="1.800"><circle cx="25" cy="6" r="5" /><path d="M1 6 H20" /></svg>
          </ToggleRow>
          <DropBox $h={26} $pad="1px 0 0 8px">Add drill-through fields here</DropBox>
        </VizPane>

        <FieldsPane>
          <PaneHead><span>Fields</span><Chevron dir="right" w={11} /></PaneHead>
          <SearchBox><Magnifier w={14} c="#605e5c" />Search</SearchBox>
          <FieldsList>
            <TableRow><Chevron w={12} s={1} c="#605e5c" /><TableIcon /><TableName>blobplmamazing</TableName></TableRow>
            {fields.map(([name, kind]) => (
              <FieldRow key={name}>
                <span>{kind === "date" && <Chevron dir="right" w={10} s={1} c="#605e5c" />}</span>
                <Check />
                <span>{kind === "sum" ? <Sigma /> : kind === "date" ? <Calendar /> : null}</span>
                <span>{name}</span>
              </FieldRow>
            ))}
          </FieldsList>
        </FieldsPane>
      </Workspace>

      <StatusBar><span>Page 2 of 2</span><span>Update available (click to download)</span></StatusBar>
      <Strip>
        <StripPart $w={48} $c="#1d1c21" /><StripPart $w={344} $c="#e4e3e4" /><StripPart $w={785} $c="#201e22" /><StripPart $w={48} $c="#565251" />
        <StripPart $w={99} $c="#33241f" /><StripPart $w={48} $c="#b3652a" /><StripPart $w={548} $c="#38241f" />
      </Strip>
    </Shell>
  );
}
